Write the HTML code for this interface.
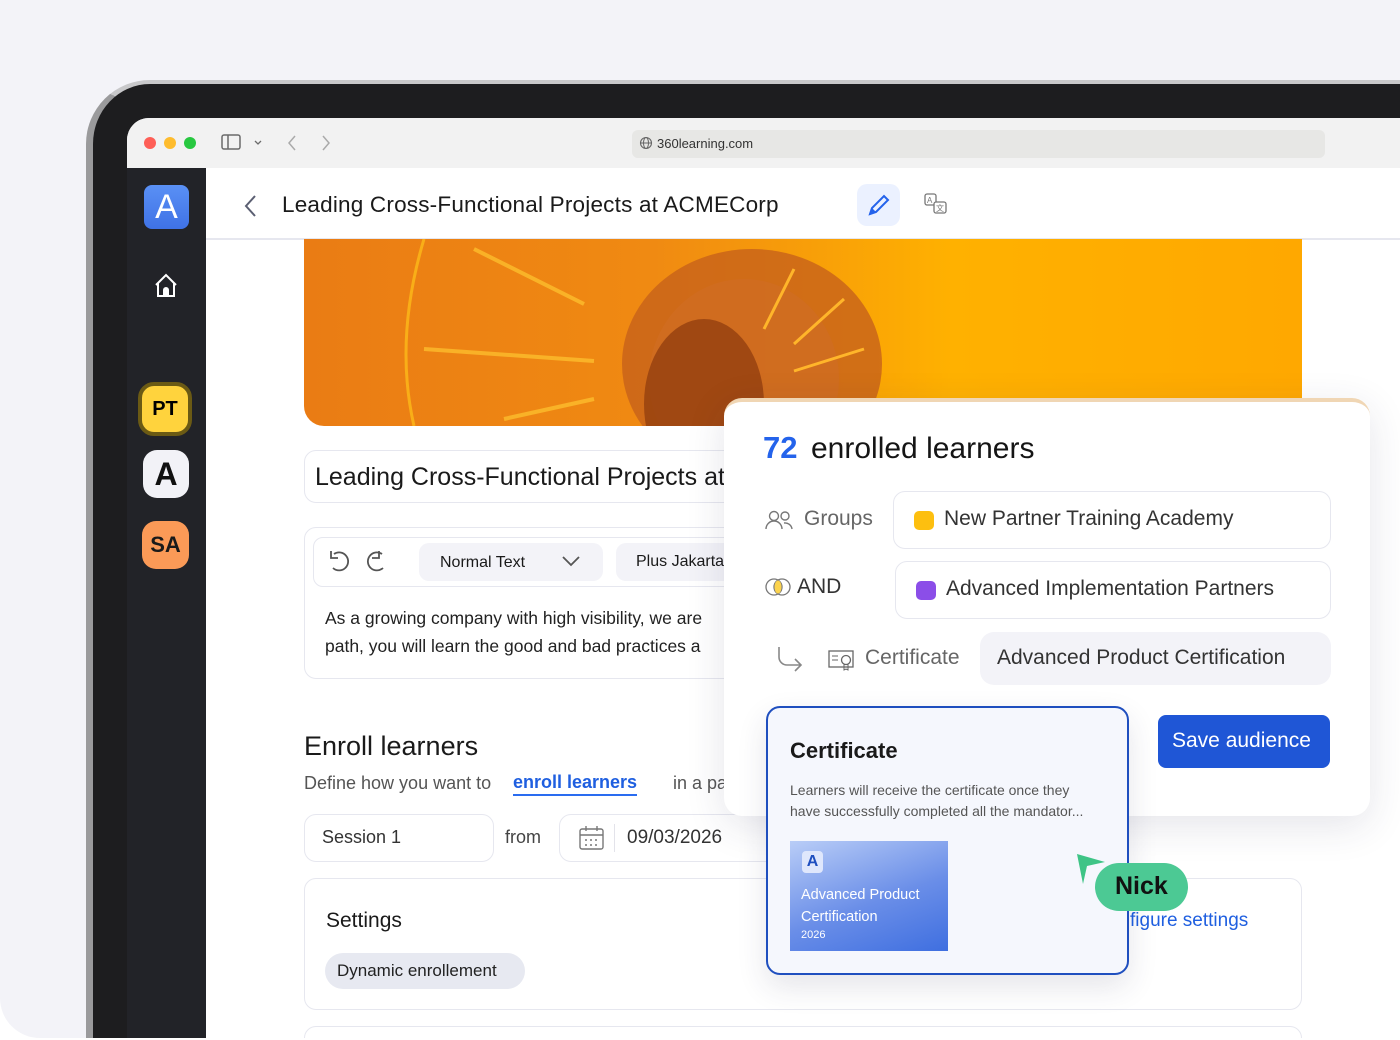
<!DOCTYPE html>
<html><head><meta charset="utf-8"><style>
*{box-sizing:border-box;margin:0;padding:0}
body{width:1400px;height:1040px;background:#fff;font-family:"Liberation Sans",sans-serif;overflow:hidden;position:relative}
.a{position:absolute}
.bg{left:0;top:0;width:1400px;height:1038px;background:#f3f3f8;border-radius:0 0 40px 40px}
.bezel{left:86px;top:80px;width:1400px;height:958px;background:#1d1d1f;border-radius:64px 0 0 0;border-left:7px solid #9a9a9c;border-top:4px solid #c8c8ca}
.screen{left:127px;top:118px;width:1300px;height:920px;background:#fff;border-radius:22px 0 0 0;overflow:hidden}
.tb{left:0;top:0;width:1300px;height:50px;background:#f2f2f2}
.side{left:0;top:50px;width:79px;height:880px;background:#222328}
.t{white-space:nowrap;color:#1a1a1a}
.box{border:1.5px solid #e6e7ef;border-radius:12px;background:#fff}
</style></head><body>
<div class="a bg"></div>
<div class="a bezel"></div>
<div class="a screen">
 <div class="a tb">
  <div class="a" style="left:17px;top:19px;width:12px;height:12px;border-radius:50%;background:#fe5f57"></div>
  <div class="a" style="left:37px;top:19px;width:12px;height:12px;border-radius:50%;background:#febc2e"></div>
  <div class="a" style="left:57px;top:19px;width:12px;height:12px;border-radius:50%;background:#28c840"></div>
  <svg class="a" style="left:94px;top:15px" width="50" height="20"><rect x="1" y="2" width="18" height="14" rx="2" fill="none" stroke="#6b6b6b" stroke-width="1.5"/><line x1="7" y1="2" x2="7" y2="16" stroke="#6b6b6b" stroke-width="1.5"/><path d="M34 8l3 3 3-3" fill="none" stroke="#6b6b6b" stroke-width="1.3"/></svg>
  <svg class="a" style="left:158px;top:15px" width="50" height="20"><path d="M10 3l-6 7 6 7" fill="none" stroke="#aaa" stroke-width="1.5"/><path d="M38 3l6 7-6 7" fill="none" stroke="#aaa" stroke-width="1.5"/></svg>
  <div class="a" style="left:505px;top:12px;width:693px;height:28px;background:#e7e7e5;border-radius:6px"></div>
  <svg class="a" style="left:512px;top:18px" width="14" height="14"><circle cx="7" cy="7" r="5.5" fill="none" stroke="#666" stroke-width="1.1"/><ellipse cx="7" cy="7" rx="2.5" ry="5.5" fill="none" stroke="#666" stroke-width="1"/><line x1="1.5" y1="7" x2="12.5" y2="7" stroke="#666"/></svg>
  <div class="a t" style="left:530px;top:18px;font-size:13px;color:#333">360learning.com</div>
 </div>
 <div class="a side">
  <div class="a" style="left:17px;top:17px;width:45px;height:44px;border-radius:8px;background:linear-gradient(#5a90f5,#3f72e6);color:#fff;font-size:34px;text-align:center;line-height:44px">A</div>
  <svg class="a" style="left:25px;top:104px" width="28" height="28"><path d="M4 13L14 3l10 10M6 11v13h16V11" fill="none" stroke="#fff" stroke-width="2"/><path d="M11 24v-6a3 3 0 016 0v6z" fill="#fff"/></svg>
  <div class="a" style="left:11px;top:214px;width:54px;height:54px;border-radius:16px;background:#ffd33d;border:4px solid #6b5a14;font-weight:bold;font-size:20px;text-align:center;line-height:46px">PT</div>
  <div class="a" style="left:16px;top:282px;width:46px;height:48px;border-radius:14px;background:#f2f2f7;font-weight:bold;font-size:32px;text-align:center;line-height:48px;color:#111">A</div>
  <div class="a" style="left:15px;top:353px;width:47px;height:48px;border-radius:14px;background:#fb9a57;font-weight:bold;font-size:22px;text-align:center;line-height:48px;color:#1a1a1a">SA</div>
 </div>
 <div class="a" style="left:79px;top:120px;width:1230px;height:1.5px;background:#e6e7ef"></div>
 <svg class="a" style="left:113px;top:75px" width="20" height="26"><path d="M15 3L6 13l9 10" fill="none" stroke="#5b5f72" stroke-width="2"/></svg>
 <div class="a t" style="left:155px;top:74px;font-size:22.5px;letter-spacing:.2px">Leading Cross-Functional Projects at ACMECorp</div>
 <div class="a" style="left:730px;top:66px;width:43px;height:42px;border-radius:10px;background:#ebf1ff"></div>
 <svg class="a" style="left:740px;top:75px" width="24" height="24"><path d="M3 21l2-6L17 3l4 4L9 19z" fill="none" stroke="#2463eb" stroke-width="2"/><path d="M3 21l2-6 4 4z" fill="#2463eb"/></svg>
 <svg class="a" style="left:797px;top:75px" width="24" height="24"><rect x="1" y="1" width="11" height="11" rx="2" fill="none" stroke="#777" stroke-width="1.3"/><rect x="10" y="9" width="12" height="11" rx="2" fill="#fff" stroke="#777" stroke-width="1.3"/><text x="3" y="10" font-size="8" fill="#777">A</text><text x="12" y="18" font-size="8" fill="#777">文</text></svg>
 <svg class="a" style="left:177px;top:121px" width="998" height="187"><defs><linearGradient id="g" x1="0" x2="1"><stop offset="0" stop-color="#ea7c14"/><stop offset=".35" stop-color="#f08a12"/><stop offset=".65" stop-color="#ffb100"/><stop offset="1" stop-color="#ffa800"/></linearGradient><clipPath id="c"><path d="M0 0h998v187H20a20 20 0 01-20-20z"/></clipPath></defs><g clip-path="url(#c)"><rect width="998" height="187" fill="url(#g)"/><path d="M120 0q-30 100 -10 187" stroke="#ffc21a" stroke-width="3" fill="none" opacity=".7"/><path d="M170 10l110 55M120 110l170 12M200 180l90-20" stroke="#ffc530" stroke-width="4" opacity=".7"/><ellipse cx="448" cy="125" rx="130" ry="115" fill="#c7621a" opacity=".8"/><ellipse cx="440" cy="140" rx="95" ry="100" fill="#cf6d22" opacity=".8"/><ellipse cx="400" cy="165" rx="60" ry="85" fill="#94400f" opacity=".8"/><path d="M490 30l-30 60M540 60l-50 45M560 110l-70 22" stroke="#ffb52a" stroke-width="3"/></g></svg>
 <div class="a box" style="left:177px;top:332px;width:600px;height:53px"></div>
 <div class="a t" style="left:188px;top:345px;font-size:25px">Leading Cross-Functional Projects at</div>
 <div class="a box" style="left:177px;top:409px;width:600px;height:152px"></div>
 <div class="a box" style="left:186px;top:419px;width:600px;height:50px;border-radius:10px"></div>
 <svg class="a" style="left:199px;top:431px" width="70" height="26"><path d="M8 5a9 9 0 11-1 14" fill="none" stroke="#555" stroke-width="1.8"/><path d="M5 2v7h7" fill="none" stroke="#555" stroke-width="1.8"/><path d="M62 5a9 9 0 10 1 14" transform="translate(-6 0)" fill="none" stroke="#555" stroke-width="1.8"/><path d="M59 2v7h-7" transform="translate(-6 0)" fill="none" stroke="#555" stroke-width="1.8"/></svg>
 <div class="a" style="left:292px;top:425px;width:184px;height:38px;border-radius:10px;background:#f3f3f8"></div>
 <div class="a t" style="left:313px;top:436px;font-size:16px">Normal Text</div>
 <svg class="a" style="left:434px;top:436px" width="20" height="14"><path d="M2 3l8 8 8-8" fill="none" stroke="#555" stroke-width="1.8"/></svg>
 <div class="a" style="left:489px;top:425px;width:120px;height:38px;border-radius:10px;background:#f3f3f8"></div>
 <div class="a t" style="left:509px;top:435px;font-size:16px">Plus Jakarta</div>
 <div class="a t" style="left:198px;top:486px;font-size:17.5px;line-height:28px;color:#222">As a growing company with high visibility, we are<br>path, you will learn the good and bad practices a</div>
 <div class="a t" style="left:177px;top:613px;font-size:27px">Enroll learners</div>
 <div class="a t" style="left:177px;top:655px;font-size:18px;color:#555">Define how you want to</div>
 <div class="a t" style="left:386px;top:654px;font-size:18px;color:#1f5fe0;font-weight:bold;border-bottom:2.5px solid #2a6cf0;padding-bottom:1px">enroll learners</div>
 <div class="a t" style="left:546px;top:655px;font-size:18px;color:#555">in a pa</div>
 <div class="a box" style="left:177px;top:696px;width:190px;height:48px"></div>
 <div class="a t" style="left:195px;top:709px;font-size:18px;color:#333">Session 1</div>
 <div class="a t" style="left:378px;top:709px;font-size:18px;color:#444">from</div>
 <div class="a box" style="left:432px;top:696px;width:260px;height:48px"></div>
 <svg class="a" style="left:452px;top:707px" width="26" height="26"><rect x="1" y="4" width="23" height="20" rx="2" fill="none" stroke="#777" stroke-width="1.4"/><line x1="1" y1="10" x2="24" y2="10" stroke="#777" stroke-width="1.4"/><line x1="7" y1="1" x2="7" y2="6" stroke="#777" stroke-width="1.4"/><line x1="18" y1="1" x2="18" y2="6" stroke="#777" stroke-width="1.4"/><g fill="#777"><circle cx="7" cy="15" r="1"/><circle cx="12" cy="15" r="1"/><circle cx="17" cy="15" r="1"/><circle cx="7" cy="20" r="1"/><circle cx="12" cy="20" r="1"/><circle cx="17" cy="20" r="1"/></g></svg>
 <div class="a" style="left:487px;top:706px;width:1px;height:28px;background:#e3e3ea"></div>
 <div class="a t" style="left:500px;top:709px;font-size:19px;color:#333">09/03/2026</div>
 <div class="a box" style="left:177px;top:760px;width:998px;height:132px"></div>
 <div class="a t" style="left:199px;top:791px;font-size:21px">Settings</div>
 <div class="a" style="left:198px;top:835px;width:200px;height:36px;border-radius:18px;background:#e7e9f1"></div>
 <div class="a t" style="left:210px;top:843px;font-size:17px;color:#222">Dynamic enrollement</div>
 <div class="a t" style="left:1003px;top:792px;font-size:19px;color:#1f5fe0">figure settings</div>
 <div class="a box" style="left:177px;top:908px;width:998px;height:40px"></div>
</div>
<div class="a" style="left:724px;top:398px;width:646px;height:418px;background:#fff;border-radius:18px;box-shadow:0 10px 40px rgba(40,40,80,.12);border-top:4px solid #f0d6b4"></div>
<div class="a t" style="left:763px;top:430px;font-size:31px;color:#2463eb;font-weight:bold">72</div>
<div class="a t" style="left:811px;top:432px;font-size:30px;color:#151515">enrolled learners</div>
<svg class="a" style="left:765px;top:509px" width="30" height="22"><circle cx="9" cy="7" r="4.5" fill="none" stroke="#777" stroke-width="1.4"/><path d="M1 20a8 8 0 0116 0" fill="none" stroke="#777" stroke-width="1.4"/><circle cx="20" cy="7" r="4" fill="none" stroke="#777" stroke-width="1.4"/><path d="M19 14a7 7 0 018 6" fill="none" stroke="#777" stroke-width="1.4"/></svg>
<div class="a t" style="left:804px;top:507px;font-size:21px;color:#666">Groups</div>
<div class="a box" style="left:893px;top:491px;width:438px;height:58px"></div>
<div class="a" style="left:914px;top:511px;width:20px;height:19px;border-radius:5px;background:#fdbf0f"></div>
<div class="a t" style="left:944px;top:507px;font-size:21px;color:#333">New Partner Training Academy</div>
<svg class="a" style="left:764px;top:577px" width="28" height="20"><circle cx="10" cy="10" r="8" fill="none" stroke="#777" stroke-width="1.3"/><circle cx="18" cy="10" r="8" fill="none" stroke="#777" stroke-width="1.3"/><ellipse cx="14" cy="10" rx="3.5" ry="6.5" fill="#fcd34d"/></svg>
<div class="a t" style="left:797px;top:575px;font-size:21px;color:#333">AND</div>
<div class="a box" style="left:895px;top:561px;width:436px;height:58px"></div>
<div class="a" style="left:916px;top:581px;width:20px;height:19px;border-radius:5px;background:#8b4ee8"></div>
<div class="a t" style="left:946px;top:577px;font-size:21px;color:#333">Advanced Implementation Partners</div>
<svg class="a" style="left:775px;top:645px" width="30" height="28"><path d="M4 2v10a8 8 0 008 8h14M20 14l6 6-6 6" fill="none" stroke="#888" stroke-width="1.6"/></svg>
<svg class="a" style="left:828px;top:648px" width="28" height="26"><rect x="1" y="3" width="24" height="16" fill="none" stroke="#666" stroke-width="1.3"/><line x1="4" y1="8" x2="10" y2="8" stroke="#666"/><line x1="4" y1="12" x2="10" y2="12" stroke="#666"/><circle cx="18" cy="12" r="4.5" fill="#fff" stroke="#666" stroke-width="1.3"/><path d="M16 16v6l2-1 2 1v-6" fill="none" stroke="#666"/></svg>
<div class="a t" style="left:865px;top:646px;font-size:21px;color:#666">Certificate</div>
<div class="a" style="left:980px;top:632px;width:351px;height:53px;border-radius:14px;background:#f3f3f8"></div>
<div class="a t" style="left:997px;top:646px;font-size:21px;color:#333">Advanced Product Certification</div>
<div class="a" style="left:1158px;top:715px;width:172px;height:53px;border-radius:8px;background:#1f56d6"></div>
<div class="a t" style="left:1172px;top:729px;font-size:21px;color:#fff">Save audience</div>
<div class="a" style="left:766px;top:706px;width:363px;height:269px;border:2.5px solid #1f4fbf;border-radius:14px;background:#f5f7fd;box-shadow:0 12px 30px rgba(40,40,80,.12)"></div>
<div class="a t" style="left:790px;top:738px;font-size:22px;font-weight:bold;color:#1a1a1a">Certificate</div>
<div class="a t" style="left:790px;top:780px;font-size:14px;line-height:21px;color:#555">Learners will receive the certificate once they<br>have successfully completed all the mandator...</div>
<div class="a" style="left:790px;top:841px;width:158px;height:110px;background:linear-gradient(160deg,#b9cdf7,#6a8ee8 55%,#3f6fe0)"></div>
<div class="a" style="left:802px;top:851px;width:21px;height:22px;border-radius:4px;background:#dfe7fc;color:#1f4fbf;font-size:16px;font-weight:bold;text-align:center;line-height:22px">A</div>
<div class="a t" style="left:801px;top:884px;font-size:14.5px;line-height:22px;color:#fff">Advanced Product<br>Certification</div>
<div class="a t" style="left:801px;top:929px;font-size:11px;color:#fff">2026</div>
<svg class="a" style="left:1076px;top:853px" width="32" height="32"><path d="M1 1l28 8-18 4-4 18z" fill="#3ec486"/></svg>
<div class="a" style="left:1095px;top:863px;width:93px;height:48px;border-radius:24px;background:#4cc994"></div>
<div class="a t" style="left:1115px;top:872px;font-size:25px;font-weight:bold;color:#111">Nick</div>
</body></html>
